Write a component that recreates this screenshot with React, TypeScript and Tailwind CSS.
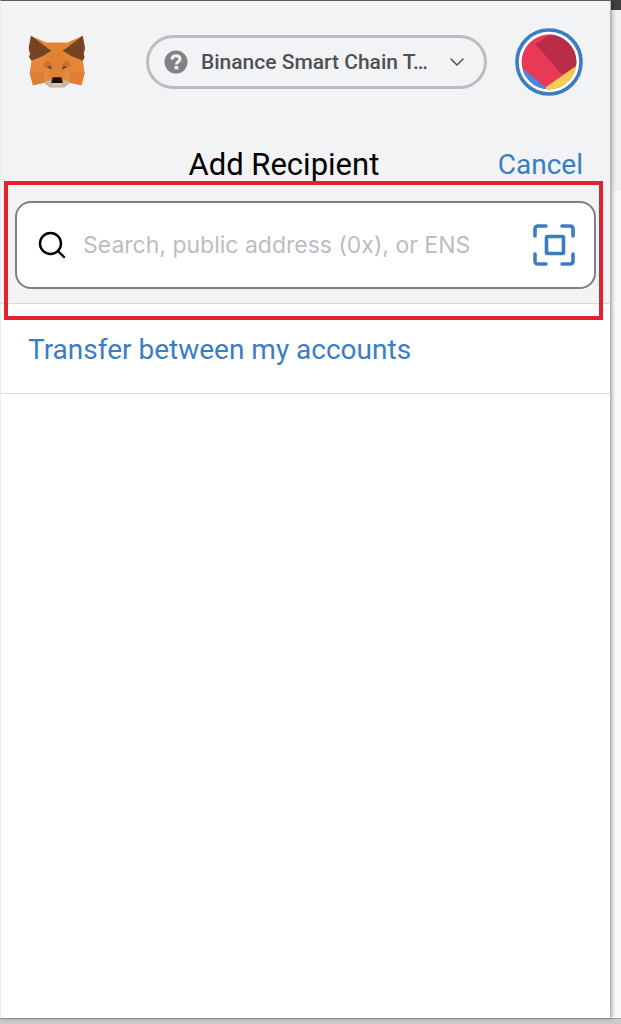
import { ChevronDown } from "lucide-react";

function FoxLogo() {
  return (
    <svg viewBox="27 31 174 162" className="h-[54px] w-[58px] shrink-0" role="img" aria-label="MetaMask">
      <path d="M36 33 82 54H144L191 33 197 70 191 110 197 145 187 182 153 174 135 188H92L76 174 42 182 32 145 38 110 30 70Z" fill="#e38636" />
      <path d="M82 54H144L134 88 140 112 135 160H94L89 112 96 80Z" fill="#e08233" />
      <path d="M38 110 72 92 90 112 96 155 76 174 34 145Z" fill="#e5863a" />
      <path d="M191 110 157 92 140 112 134 155 153 174 196 145Z" fill="#e5863a" />
      <path d="M32 145 76 143 76 174 42 182Z" fill="#df7f36" />
      <path d="M197 145 153 143 153 174 187 182Z" fill="#df7f36" />
      <path d="M76 143 95 161 90 178 76 174Z" fill="#e68c42" />
      <path d="M153 143 134 161 139 178 153 174Z" fill="#e68c42" />
      <path d="M36 33 97 78 72 94 37 108 30 96 33 88 29 70Z" fill="#764423" />
      <path d="M191 33 131 78 157 94 192 108 197 96 194 88 198 70Z" fill="#764423" />
      <path d="M72 123 83 106 97 118 100 137Z" fill="#cb7033" />
      <path d="M156 123 145 106 131 118 128 137Z" fill="#cb7033" />
      <path d="M84 127 94 124 97 134Z" fill="#3d4045" />
      <path d="M143 127 133 124 130 134Z" fill="#3d4045" />
      <path d="M76 173 93 166 99 178 129 178 135 166 153 173 134 188 94 188Z" fill="#c5b8ad" />
      <path d="M101 158H127L131 175H97Z" fill="#19130f" />
      <path d="M99 175H129L126 182H102Z" fill="#d8cabd" />
    </svg>
  );
}

function AccountAvatar() {
  return (
    <svg viewBox="28 83 206 206" className="size-[68px]" aria-hidden="true">
      <defs>
        <clipPath id="avatar-disc">
          <circle cx="131" cy="186" r="83" />
        </clipPath>
      </defs>
      <circle cx="131" cy="186" r="97" fill="#fff" stroke="#3b7dc4" strokeWidth="11" />
      <g clipPath="url(#avatar-disc)">
        <path d="M40 95H225V280H40Z" fill="#e83a56" />
        <path d="M90 132 145 95H225V190L170 224Z" fill="#b92c48" />
        <path d="M40 196 122 264V280H40Z" fill="#4488e4" />
        <path d="M122 262 222 192V280H122Z" fill="#f2cf4f" />
      </g>
    </svg>
  );
}

function QuestionIcon() {
  return (
    <svg viewBox="0 0 24 24" className="size-6 shrink-0" aria-hidden="true">
      <circle cx="12" cy="12" r="11.5" fill="#818285" />
      <path d="M7.800 9.400C8.200 6.900 9.800 5.800 12 5.800c2.300 0 4 1.200 4 3.200 0 2.700-3.600 2.600-3.600 5.600" fill="none" stroke="#f2f3f5" strokeWidth="3" />
      <rect x="10.600" y="16" width="3.700" height="3.400" fill="#f2f3f5" />
    </svg>
  );
}

function SearchIcon() {
  return (
    <svg viewBox="0 0 28 28" className="size-7 shrink-0" fill="none" stroke="#000" strokeWidth="2.400" strokeLinecap="round" aria-hidden="true">
      <circle cx="12.500" cy="12.500" r="10.500" />
      <path d="m20 20 6 6" />
    </svg>
  );
}

function ScanIcon() {
  return (
    <svg viewBox="0 0 42 42" className="size-[42px]" fill="none" stroke="#3b7dc4" strokeWidth="3.600" strokeLinecap="round" strokeLinejoin="round" aria-hidden="true">
      <path d="M2 12V5Q2 2 5 2H13M29 2H37Q40 2 40 5V12M40 30V37Q40 40 37 40H29M13 40H5Q2 40 2 37V30" />
      <rect x="13.500" y="12.500" width="17" height="17" rx="1" />
    </svg>
  );
}

export default function App() {
  return (
    <div className="flex min-h-screen flex-col bg-[#d0d0d1] font-['Roboto',sans-serif]">
      <div className="flex flex-1 bg-[#f9f9fa]">
        <main className="z-10 flex min-w-0 flex-1 flex-col border-x border-t border-t-[#5a5a5e] border-r-[#b4b5b8] border-l-[#ececee] bg-white shadow-[1px_0_4px_rgba(0,0,0,0.35)]">
          <header className="bg-[#f2f3f5]">
            <div className="flex items-center px-[27px] pt-[27px]">
              <FoxLogo />
              <button type="button" className="mr-7 ml-[60px] flex h-[54px] min-w-0 flex-1 items-center rounded-full border-3 border-[#bbbcc1] px-[15px] text-[#4e5054]">
                <QuestionIcon />
                <span className="ml-[13px] min-w-0 flex-1 truncate text-left text-[21px] leading-7 font-medium">Binance Smart Chain T…</span>
                <ChevronDown className="size-6 shrink-0" strokeWidth={1.5} />
              </button>
              <button type="button" aria-label="Account" className="shrink-0">
                <AccountAvatar />
              </button>
            </div>
            <div className="mt-[53px] flex items-center px-[27px]">
              <h1 className="flex-1 pl-[42px] text-center text-[31px] leading-8 text-black">Add Recipient</h1>
              <button type="button" className="text-[28px] leading-8 text-[#3b7dc4]">Cancel</button>
            </div>
            <div className="relative border-b border-[#d9dadd] px-[14px] pt-5 pb-[14px]">
              <div className="flex h-[88px] items-center rounded-2xl border-2 border-[#7d8087] bg-white pr-[19px] pl-[21px]">
                <SearchIcon />
                <input
                  type="text"
                  aria-label="Search, public address (0x), or ENS"
                  placeholder="Search, public address (0x), or ENS"
                  className="ml-[17px] min-w-0 flex-1 bg-transparent font-['Inter',sans-serif] text-[23px] leading-8 outline-none placeholder:text-[#bbbdc2]"
                />
                <button type="button" aria-label="Scan QR code" className="shrink-0">
                  <ScanIcon />
                </button>
              </div>
              <div className="pointer-events-none absolute top-0 right-[7px] -bottom-[17px] left-[3px] border-4 border-[#e0232e]" />
            </div>
          </header>
          <div className="border-b border-[#dcdddf] px-[27px] pt-[30px] pb-[27px]">
            <button type="button" className="block text-left text-[28px] leading-8 text-[#3b7dc4]">Transfer between my accounts</button>
          </div>
        </main>
        <div className="w-[10px] border-t-10 border-[#3f3f42]">
          <div className="h-[181px] bg-[#f0f1f3]" />
        </div>
      </div>
      <div className="h-[6px] border-t border-[#a4a4a5] bg-[#cacacb]" />
    </div>
  );
}
